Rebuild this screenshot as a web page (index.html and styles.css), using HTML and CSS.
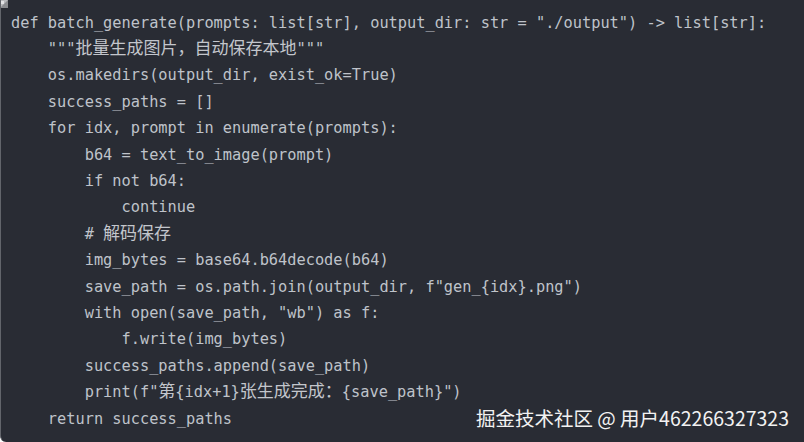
FILE: index.html
```html
<!DOCTYPE html>
<html lang="zh-CN">
<head>
<meta charset="utf-8">
<title>batch_generate</title>
<link rel="stylesheet" href="styles.css">
</head>
<body>
<div class="code-block">
  <svg class="corner-icon" width="9" height="9" viewBox="0 0 9 9" aria-hidden="true">
    <rect x="0" y="0" width="8" height="8" fill="#b9bbbe"/>
    <path d="M0 8 L8 0 L8 8 Z" fill="#8a8c90"/>
    <rect x="1" y="1" width="3" height="3" fill="#e2e3e5"/>
  </svg>
<pre class="code">def batch_generate(prompts: list[str], output_dir: str = "./output") -> list[str]:
    """<span class="cjk">批量生成图片，自动保存本地</span>"""
    os.makedirs(output_dir, exist_ok=True)
    success_paths = []
    for idx, prompt in enumerate(prompts):
        b64 = text_to_image(prompt)
        if not b64:
            continue
        # <span class="cjk">解码保存</span>
        img_bytes = base64.b64decode(b64)
        save_path = os.path.join(output_dir, f"gen_{idx}.png")
        with open(save_path, "wb") as f:
            f.write(img_bytes)
        success_paths.append(save_path)
        print(f"<span class="cjk">第</span>{idx+1}<span class="cjk">张生成完成：</span>{save_path}")
    return success_paths</pre>
  <div class="watermark">掘金技术社区 @ 用户462266327323</div>
</div>
</body>
</html>
```

FILE: styles.css
```css
html, body {
  margin: 0;
  padding: 0;
  background: #ffffff;
}

.code-block {
  position: relative;
  box-sizing: border-box;
  width: 804px;
  height: 442px;
  background: #292c34;
  border-left: 1px solid #62656b;
  border-bottom-left-radius: 6px;
  padding: 9.5px 0 0 10px;
  overflow: hidden;
}

.corner-icon {
  position: absolute;
  left: -1px;
  top: 0;
}

.code {
  margin: 0;
  font-family: "DejaVu Sans Mono", "Liberation Mono", monospace;
  font-size: 15.3px;
  line-height: 26.4px;
  color: #bfc3ca;
  white-space: pre;
}

.cjk {
  font-family: "Noto Sans CJK SC", sans-serif;
  font-size: 17px;
  line-height: 1;
  color: #c3c6cc;
}

.watermark {
  position: absolute;
  right: 15px;
  bottom: 12px;
  font-family: "Noto Sans CJK SC", "Noto Sans", sans-serif;
  font-size: 19.5px;
  line-height: 24px;
  color: #f2f2f2;
  letter-spacing: 0;
}
```
